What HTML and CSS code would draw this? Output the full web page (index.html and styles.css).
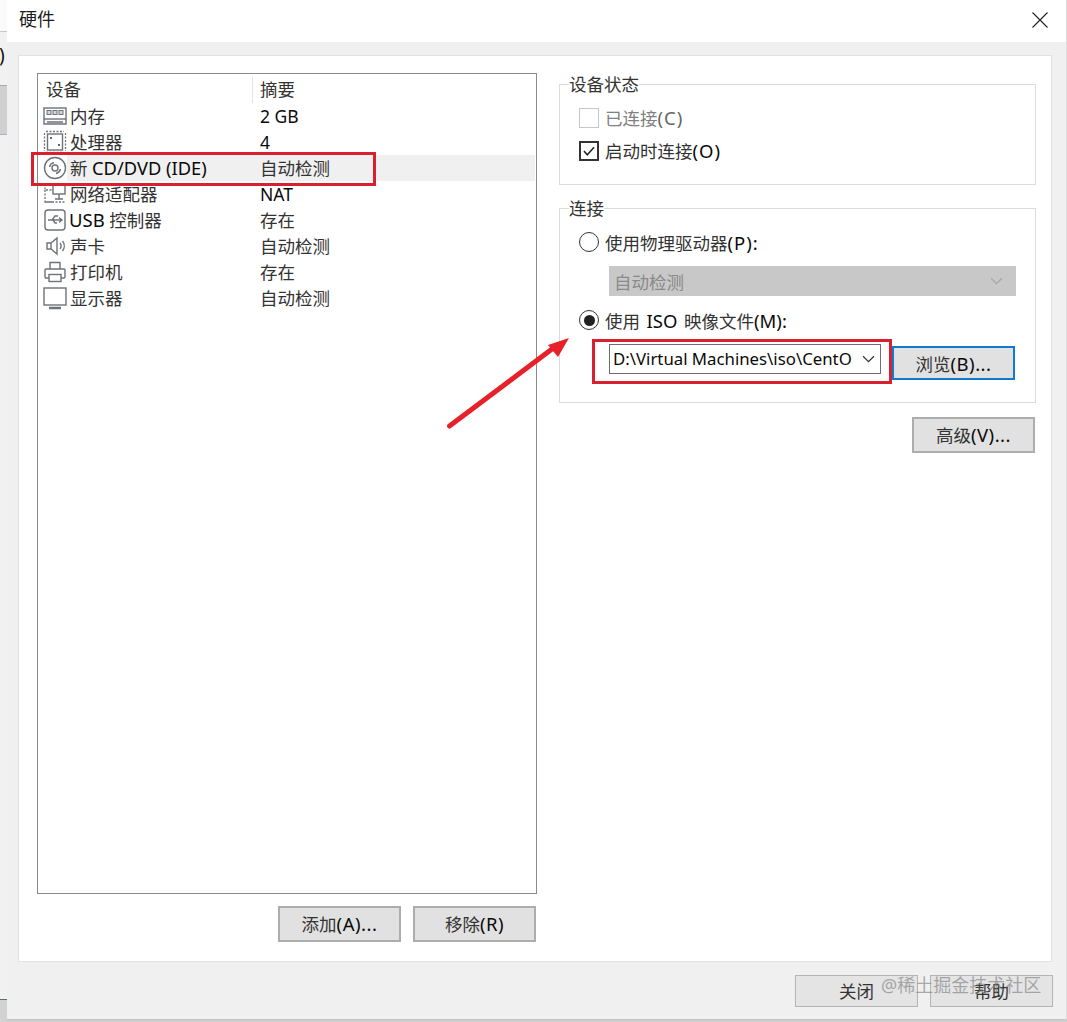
FILE: index.html
```html
<!DOCTYPE html>
<html lang="zh-CN">
<head>
<meta charset="utf-8">
<title>硬件</title>
<link rel="stylesheet" href="styles.css">
</head>
<body>
<div class="desktop">
  <div class="strip">
    <div class="strip-top"></div>
    <div class="strip-text">)</div>
    <div class="strip-block"></div>
    <div class="strip-mid"></div>
    <div class="strip-bottom"></div>
  </div>
  <div class="dialog">
    <header class="titlebar">
      <span class="title">硬件</span>
      <svg class="close" viewBox="0 0 16 16"><path d="M.5.5l15 15M15.500.5l-15 15"/></svg>
    </header>
    <div class="dialog-body">
      <main class="panel">
        <section class="left">
          <div class="list">
            <div class="row head"><span class="cell-icon"></span><span class="name hname">设备</span><span class="sum hsum">摘要</span></div>
            <div class="row"><span class="cell-icon"><svg class="ico" viewBox="0 0 24 24"><rect x="1" y="4" width="22" height="11"/><rect class="chip" x="4" y="6.500" width="4" height="4"/><rect class="chip" x="10" y="6.500" width="4" height="4"/><rect class="chip" x="16" y="6.500" width="4" height="4"/><path d="M1 15v5h22v-5M4 18h16"/></svg></span><span class="name">内存</span><span class="sum"><span class="lt">2 GB</span></span></div>
            <div class="row"><span class="cell-icon"><svg class="ico" viewBox="0 0 24 24"><rect x="4.500" y="4" width="15" height="16"/><path class="pins" d="M3 1.500h18M3 22.500h18M1.500 3v18M22.500 3v18"/><rect class="dot" x="7" y="7" width="2" height="2"/><rect class="dot" x="15" y="14" width="2" height="2"/></svg></span><span class="name">处理器</span><span class="sum"><span class="lt">4</span></span></div>
            <div class="row sel"><span class="cell-icon"><svg class="ico cd" viewBox="0 0 24 24"><circle cx="12" cy="12" r="10.500"/><circle cx="12" cy="12" r="3"/><path d="M6.500 11A6 6 0 0 1 11 6.500M17.500 13A6 6 0 0 1 13 17.500"/></svg></span><span class="name">新 <span class="lt">CD/DVD (IDE)</span></span><span class="sum">自动检测</span></div>
            <div class="row"><span class="cell-icon"><svg class="ico" viewBox="0 0 24 24"><rect x="10" y="3" width="12" height="9"/><path d="M16 12v5M12 17h8"/><path class="pins" d="M2 2v6h8M2 8v12h7M2 20h20"/></svg></span><span class="name">网络适配器</span><span class="sum"><span class="lt">NAT</span></span></div>
            <div class="row"><span class="cell-icon"><svg class="ico" viewBox="0 0 24 24"><rect x="2" y="2" width="20" height="20" rx="3"/><path d="M5 12h14M16 9.500l3 2.500-3 2.500M9 12l3-4h3M10 12l2 3h2"/></svg></span><span class="name usb"><span class="lt">USB</span> 控制器</span><span class="sum">存在</span></div>
            <div class="row"><span class="cell-icon"><svg class="ico" viewBox="0 0 24 24"><path d="M4 9h4l6-5v16l-6-5H4zM8 9v6"/><path d="M17 9a5 5 0 0 1 0 6M19.500 7a8 8 0 0 1 0 10"/></svg></span><span class="name">声卡</span><span class="sum">自动检测</span></div>
            <div class="row"><span class="cell-icon"><svg class="ico" viewBox="0 0 24 24"><path d="M7 9V2.500h10V9M6 18H3a1 1 0 0 1-1-1V10a1 1 0 0 1 1-1h18a1 1 0 0 1 1 1v7a1 1 0 0 1-1 1h-3"/><rect x="6" y="14.500" width="12" height="7"/></svg></span><span class="name">打印机</span><span class="sum">存在</span></div>
            <div class="row"><span class="cell-icon"><svg class="ico" viewBox="0 0 24 24"><rect x="1" y="2" width="22" height="17"/><path class="base" d="M6 22h12"/></svg></span><span class="name">显示器</span><span class="sum">自动检测</span></div>
          </div>
          <div class="list-actions">
            <button class="btn">添加<span class="lt">(A)...</span></button>
            <button class="btn">移除<span class="lt">(R)</span></button>
          </div>
        </section>
        <section class="right">
          <fieldset class="group">
            <legend>设备状态</legend>
            <div class="opt disabled"><span class="box"></span><span class="label">已连接<span class="lt">(C)</span></span></div>
            <div class="opt"><span class="box on"><svg class="tick" viewBox="0 0 19 19"><path d="M3.500 9.500l4 4.500 8-9"/></svg></span><span class="label">启动时连接<span class="lt">(O)</span></span></div>
          </fieldset>
          <fieldset class="group conn">
            <legend>连接</legend>
            <div class="radio-row"><span class="radio"></span><span class="label">使用物理驱动器<span class="lt">(P):</span></span></div>
            <div class="select"><span>自动检测</span><svg class="chev" viewBox="0 0 12 7"><path d="M1 1l5 5 5-5"/></svg></div>
            <div class="radio-row second"><span class="radio on"></span><span class="iso-label">使用 <span class="lt">ISO</span> 映像文件<span class="lt">(M):</span></span></div>
            <div class="iso-row">
              <div class="combo"><span>D:\Virtual Machines\iso\CentO</span><svg class="chev dark" viewBox="0 0 12 7"><path d="M1 1l5 5 5-5"/></svg></div>
              <button class="btn focus">浏览<span class="lt">(B)...</span></button>
            </div>
          </fieldset>
          <button class="btn adv">高级<span class="lt">(V)...</span></button>
        </section>
      </main>
      <footer class="footer">
        <button class="btn ghost">关闭</button>
        <button class="btn ghost">帮助</button>
      </footer>
    </div>
  </div>
  <div class="mark mark-row"></div>
  <div class="mark mark-iso"></div>
  <svg class="arrow" viewBox="0 0 130 105"><path class="shaft" d="M9.500 96L112 19"/><path class="head" d="M129 8L108 15L118 27z"/></svg>
  <div class="watermark">@稀土掘金技术社区</div>
</div>
</body>
</html>
```

FILE: styles.css
```css
* { box-sizing: border-box; }
html, body { margin: 0; padding: 0; }
body {
  font-family: "Noto Sans", "Noto Sans CJK SC", sans-serif;
  font-size: 17.5px;
  color: #333;
  background: #fff;
}
.lt { font-size: 18.5px; color: #0a0a0a; line-height: 1; }
.desktop {
  position: relative;
  display: flex;
  width: 1067px;
  height: 1022px;
  overflow: hidden;
  background: #cfcfcf;
}
.strip {
  width: 7px;
  height: 1022px;
  display: flex;
  flex-direction: column;
  overflow: hidden;
  background: #f1f1f1;
}
.strip-top { height: 32px; background: #fafafa; border-bottom: 1px solid #c8c8c8; }
.strip-text { height: 53px; line-height: 46px; font-size: 19px; margin-left: -1px; color: #111; }
.strip-block { height: 50px; background: #d0d0d0; border-top: 1px solid #a9a9a9; border-bottom: 1px solid #a9b4c0; }
.strip-mid { height: 865px; background: #f1f1f1; border-bottom: 1px solid #5b6b7b; }
.strip-bottom { flex: 1; background: #d2d2d2; }

.dialog {
  width: 1060px;
  height: 1020px;
  display: flex;
  flex-direction: column;
  background: #f0f0f0;
  border-right: 1px solid #dcdcdc;
  border-bottom: 1px solid #c4c4c4;
}
.titlebar {
  height: 42px;
  flex: none;
  background: #fff;
  display: flex;
  justify-content: space-between;
  padding: 7px 18px 0 12px;
}
.title { font-size: 18px; line-height: 24px; color: #1c1c1c; }
.close { width: 16px; height: 16px; margin-top: 5px; }
.close path { stroke: #222; stroke-width: 1.1; fill: none; }

.dialog-body { flex: 1; padding: 13px 14px 0 11px; }
.panel {
  height: 907px;
  background: #fff;
  border: 1px solid #e2e2e2;
  padding: 17px 15px 0 18px;
  display: grid;
  grid-template-columns: 500px 477px;
  column-gap: 22px;
}
.left { display: flex; flex-direction: column; }
.list {
  height: 821px;
  border: 1px solid #8a8a8a;
  padding-top: 2px;
}
.row {
  display: grid;
  grid-template-columns: 27px 190px 1fr;
  align-items: center;
  height: 26px;
  padding-left: 5px;
  margin-right: 1px;
  line-height: 26px;
  white-space: nowrap;
}
.head { height: 27px; color: #333; line-height: 24px; }
.hname { margin-left: -24px; }
.hsum { border-left: 1px solid #e4e4e4; margin-left: -8px; padding-left: 7px; }
.cell-icon { display: flex; align-items: center; height: 26px; }
.ico { width: 24px; height: 24px; fill: none; stroke: #6d7379; stroke-width: 1.400; }
.ico .chip { stroke-width: 1; fill: #d4d6d8; }
.ico .dot { fill: #5f656b; stroke: none; }
.ico .pins { stroke-dasharray: 2 1.500; stroke-width: 1.300; }
.ico .base { stroke-width: 2.500; }
.sel .name, .sel .sum { background: #f0f0f0; }
.sel .name { margin-left: -3px; padding-left: 3px; }
.sel .lt { font-size: 18.300px; }
.sum .lt { font-size: 17.500px; }
.usb { margin-left: -1px; }
.name, .sum { height: 26px; }
.list-actions {
  display: flex;
  justify-content: flex-end;
  gap: 12px;
  margin-top: 12px;
  padding-right: 1px;
}
.btn {
  width: 123px;
  height: 36px;
  padding: 0;
  font: inherit;
  color: #333;
  background: #e1e1e1;
  border: 2px solid #adadad;
  line-height: 32px;
}
.btn .lt { letter-spacing: 0.5px; }
.right { display: flex; flex-direction: column; }
.group {
  margin: 0;
  padding: 6px 19px 17px 19px;
  min-width: 0;
  border: 1px solid #dcdcdc;
}
.group legend {
  margin-left: -10px;
  padding: 0;
  height: 22px;
  line-height: 22px;
  color: #333;
}
.label .lt { letter-spacing: 1px; }
.opt { display: flex; align-items: center; height: 33px; gap: 6px; }
.disabled { color: #808080; }
.disabled .lt { color: #666; }
.box { width: 20px; height: 20px; border: 1px solid #c6c6c6; background: #fff; flex: none; display: flex; }
.box.on { border: 2px solid #333; }
.tick { width: 16px; height: 16px; }
.tick path { fill: none; stroke: #222; stroke-width: 1.800; }
.conn { margin-top: 12px; padding-top: 10px; padding-bottom: 22px; }
.radio-row { display: flex; align-items: center; height: 26px; gap: 6px; }
.second { margin-top: 11px; }
.iso-label { word-spacing: 2px; }
.radio { width: 20px; height: 20px; border: 1.500px solid #333; border-radius: 50%; flex: none; display: flex; align-items: center; justify-content: center; }
.radio.on::after { content: ""; width: 11px; height: 11px; border-radius: 50%; background: #222; }
.select {
  margin: 11px 0 0 30px;
  width: 407px;
  height: 30px;
  background: #c8c8c8;
  color: #8a8a8a;
  display: flex;
  align-items: center;
  justify-content: space-between;
  padding: 0 13px 0 5px;
}
.chev { width: 13px; height: 8px; flex: none; }
.chev path { fill: none; stroke: #a6a6a6; stroke-width: 1.100; }
.chev.dark path { stroke: #333; }
.iso-row { display: flex; align-items: flex-start; margin: 11px 0 0 30px; gap: 11px; }
.combo {
  width: 272px;
  height: 30px;
  border: 1px solid #6e6e6e;
  background: #fff;
  display: flex;
  align-items: center;
  justify-content: space-between;
  padding: 0 5px 0 3px;
  font-size: 16.800px;
  line-height: 26px;
  color: #0a0a0a;
  white-space: nowrap;
}
.focus { margin-top: 2px; height: 34px; border-color: #0f7ad2; line-height: 32px; }
.adv { align-self: flex-end; margin: 14px 1px 0 0; line-height: 33px; }
.footer {
  display: flex;
  justify-content: flex-end;
  gap: 12px;
  margin: 13px -1px 0 0;
}
.ghost { height: 32px; line-height: 28px; border-width: 1px; background: #e4e4e4; border-color: #b4b4b4; }

.mark { position: absolute; border: 3px solid #d9202e; }
.mark-row { left: 31px; top: 152px; width: 345px; height: 34px; }
.mark-iso { left: 592px; top: 339px; width: 300px; height: 45px; }
.arrow { position: absolute; left: 440px; top: 330px; width: 130px; height: 105px; }
.shaft { stroke: #e8202a; stroke-width: 5; stroke-linecap: round; fill: none; }
.head { fill: #e8202a; }
.watermark {
  position: absolute;
  left: 881px;
  top: 972px;
  font-size: 18px;
  line-height: 26px;
  color: rgba(120, 120, 120, 0.6);
  white-space: nowrap;
}
```
